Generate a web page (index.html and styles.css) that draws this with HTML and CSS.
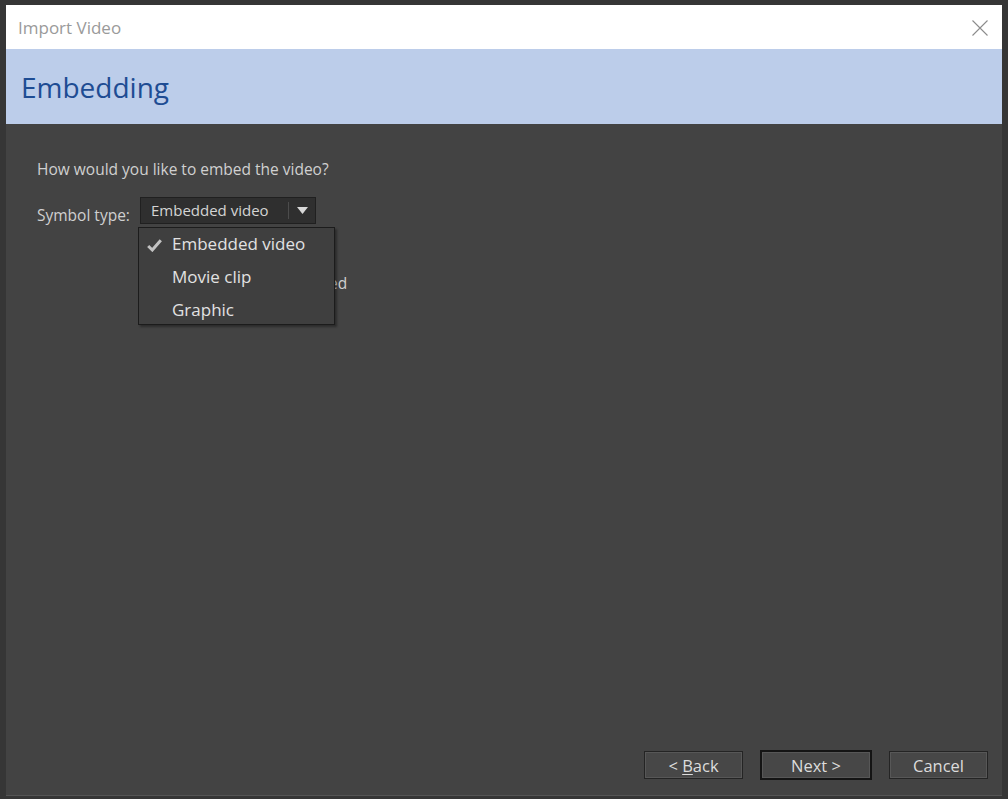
FILE: index.html
```html
<!DOCTYPE html>
<html>
<head>
    <link rel="stylesheet" href="styles.css">
</head>
<body>
    <div class="window">
        <div class="titlebar">
            <span class="title">Import Video</span>
            <svg class="close" width="16" height="16" viewBox="0 0 16 16">
                <path d="M0.5 0.5 L15.5 15.5 M15.5 0.5 L0.5 15.5" stroke="#8c8c8c" stroke-width="1.1" fill="none"/>
            </svg>
        </div>

        <div class="header">
            <h1>Embedding</h1>
        </div>

        <div class="content">
            <p class="question">How would you like to embed the video?</p>

            <div class="field">
                <label>Symbol type:</label>
                <div class="select">
                    <span class="select-value">Embedded video</span>
                    <span class="select-arrow">
                        <svg width="11" height="7" viewBox="0 0 11 7"><path d="M0 0 H11 L5.5 7 Z" fill="#d8d8d8"/></svg>
                    </span>

                    <div class="menu">
                        <div class="menu-item checked">
                            <svg class="check" width="15" height="13" viewBox="0 0 15 13">
                                <path d="M1.2 7 L5.3 11 L13.8 1.2" stroke="#c2c2c2" stroke-width="3" fill="none"/>
                            </svg>
                            Embedded video
                        </div>
                        <div class="menu-item">Movie clip</div>
                        <div class="menu-item">Graphic</div>
                    </div>
                </div>
            </div>

            <div class="option">
                <span class="checkbox"></span>
                <span>Expand timeline if needed</span>
            </div>
        </div>

        <div class="footer">
            <button class="btn">&lt; <u>B</u>ack</button>
            <button class="btn default">Next &gt;</button>
            <button class="btn">Cancel</button>
        </div>
    </div>
</body>
</html>
```

FILE: styles.css
```css
* {
    margin: 0;
    padding: 0;
    box-sizing: border-box;
}

body {
    width: 1008px;
    height: 799px;
    background: #363636;
    overflow: hidden;
    font-family: 'Open Sans', 'Noto Sans', sans-serif;
    padding: 5px 6px 4px 6px;
}

.window {
    width: 996px;
    height: 790px;
    background: #434343;
    display: flex;
    flex-direction: column;
    box-shadow: 0 1px 0 #555;
}

.titlebar {
    height: 44px;
    background: #ffffff;
    display: flex;
    align-items: center;
    justify-content: space-between;
    padding: 0 14px 0 12px;
}

.title {
    color: #9a9a9a;
    font-size: 17px;
}

.close {
    margin-top: 1px;
}

.header {
    height: 75px;
    background: #bccdea;
    display: flex;
    align-items: center;
    padding-left: 15px;
}

.header h1 {
    color: #1e4c93;
    font-size: 28px;
    font-weight: normal;
}

.content {
    flex: 1;
    padding: 34px 31px 0;
    color: #d0d0d0;
    font-size: 15.5px;
}

.question {
    line-height: 22px;
}

.field {
    display: flex;
    align-items: center;
    margin-top: 14px;
}

.field label {
    width: 103px;
    padding-top: 10px;
}

.select {
    position: relative;
    width: 176px;
    height: 27px;
    background: #2f2f2f;
    border: 1px solid #202020;
    display: flex;
    align-items: center;
    color: #d4d4d4;
    font-size: 15px;
}

.select-value {
    flex: 1;
    padding-left: 10px;
}

.select-arrow {
    width: 27px;
    height: 17px;
    border-left: 1px solid #4c4c4c;
    display: flex;
    align-items: center;
    justify-content: center;
}

.menu {
    position: absolute;
    left: -3px;
    top: 29px;
    width: 197px;
    height: 98px;
    background: #3f3f3f;
    border: 1px solid #1c1c1c;
    box-shadow: 2px 2px 2px rgba(0, 0, 0, 0.35);
    z-index: 2;
}

.menu-item {
    position: relative;
    height: 33px;
    line-height: 32px;
    padding-left: 33px;
    color: #e2e2e2;
    font-size: 17px;
}

.check {
    position: absolute;
    left: 8px;
    top: 11px;
}

.option {
    display: flex;
    align-items: center;
    gap: 6px;
    margin: 46px 0 0 103px;
}

.checkbox {
    width: 13px;
    height: 13px;
    border: 1px solid #222;
    background: #2f2f2f;
}

.footer {
    display: flex;
    justify-content: flex-end;
    align-items: center;
    gap: 17px;
    padding: 0 14px 15px 0;
}

.btn {
    width: 99px;
    height: 28px;
    background: #474747;
    border: 1px solid #242424;
    box-shadow: inset 0 0 0 1px #575757;
    color: #dcdcdc;
    font-family: 'Open Sans', 'Noto Sans', sans-serif;
    font-size: 16.5px;
}

.btn u {
    text-underline-offset: 2px;
}

.btn.default {
    width: 112px;
    height: 30px;
    border: 2px solid #141414;
}
```
